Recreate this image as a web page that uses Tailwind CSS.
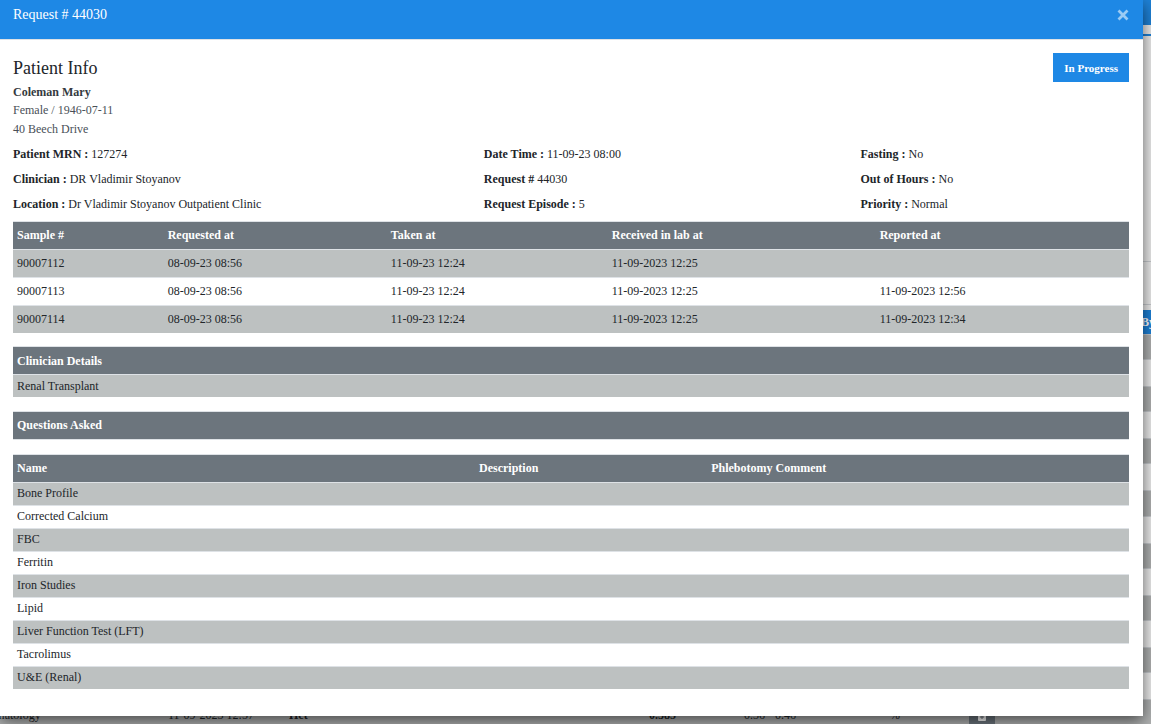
<!DOCTYPE html>
<html lang="en">
<head>
<meta charset="utf-8">
<title>Request # 44030</title>
<script src="https://cdn.jsdelivr.net/npm/@tailwindcss/browser@4"></script>
</head>
<body class="relative h-screen overflow-hidden bg-[#ededed] font-['Liberation_Serif',serif] text-xs text-[#212529]">

<!-- Results page under the dialog -->
<div class="absolute inset-0 flex flex-col overflow-hidden" inert>
  <div class="h-[25px] shrink-0 bg-[#1e82d8]"></div>
  <div class="h-[11px] shrink-0 border-b-2 border-[#1e82d8]"></div>
  <div class="h-[226px] shrink-0 border-b border-[#c8cbcf]"></div>
  <div class="h-[43px] shrink-0 border-b border-[#c8cbcf]"></div>
  <div class="mt-[5px] flex h-6 shrink-0 items-center justify-end bg-[#1e82d8] font-bold text-white"><span class="-mr-1">By</span></div>
  <div class="h-[26px] shrink-0 border-y border-[#c8cbcf] bg-[#b0b2b2]"></div>
  <div class="h-[26px] shrink-0"></div>
  <div class="h-[26px] shrink-0 border-y border-[#c8cbcf] bg-[#b0b2b2]"></div>
  <div class="h-[26px] shrink-0"></div>
  <div class="h-[26px] shrink-0 border-y border-[#c8cbcf] bg-[#b0b2b2]"></div>
  <div class="h-[26px] shrink-0"></div>
  <div class="h-[27px] shrink-0 border-y border-[#c8cbcf] bg-[#b0b2b2]"></div>
  <div class="h-[26px] shrink-0"></div>
  <div class="h-[26px] shrink-0 border-y border-[#c8cbcf] bg-[#b0b2b2]"></div>
  <div class="h-[26px] shrink-0"></div>
  <div class="h-[26px] shrink-0 border-y border-[#c8cbcf] bg-[#b0b2b2]"></div>
  <div class="h-[26px] shrink-0"></div>
  <div class="h-[26px] shrink-0 border-y border-[#c8cbcf] bg-[#b0b2b2]"></div>
  <div class="h-[26px] shrink-0"></div>
  <div class="flex h-[26px] shrink-0 items-center border-t border-[#c8cbcf] bg-[#b0b2b2] pt-1">
    <span class="-ml-6 w-48">Haematology</span>
    <span class="w-[121px]">11-09-2023 12:57</span>
    <span class="w-[360px] font-bold">Hct</span>
    <span class="w-[95px] font-bold">0.385</span>
    <span class="w-[146px]">0.36 - 0.46</span>
    <span class="w-[79px]">%</span>
    <button type="button" aria-label="Add comment" class="flex h-[22px] w-[26px] items-end justify-center self-start rounded-xs bg-[#6c757d] pb-1">
      <svg class="size-3" viewBox="0 0 12 12" fill="#ffffff"><path d="M2 1h8v9a1 1 0 0 1-1 1H3a1 1 0 0 1-1-1z"/><path d="M6 5v4M4 7h4" stroke="#6c757d"/></svg>
    </button>
  </div>
</div>

<!-- Request dialog -->
<section role="dialog" aria-labelledby="dialog-title" class="relative mr-2 bg-white pb-[27px] shadow-[0_5px_15px_rgba(0,0,0,0.6)]">
  <header class="flex h-10 items-start justify-between border-b border-[#dee2e6] bg-[#1e88e5] pt-[5px] pr-3 pl-[13px] text-white">
    <h1 id="dialog-title" class="text-sm leading-5">Request # 44030</h1>
    <button type="button" aria-label="Close" class="flex h-5 w-4 items-center justify-center text-[#9bcbf4]">
      <svg class="size-3" viewBox="0 0 12 12" fill="none" stroke="currentColor" stroke-width="2.800"><path d="M1.500 1.500l9 9M10.500 1.500l-9 9"/></svg>
    </button>
  </header>

  <div class="pt-[13px] pr-[14px] pl-[13px]">
    <div class="flex items-start justify-between">
      <div>
        <h2 class="text-lg leading-[30px]">Patient Info</h2>
        <p class="leading-[18px] font-bold text-[#343a40]">Coleman Mary</p>
        <p class="leading-[18px] text-[#495057]">Female / 1946-07-11</p>
        <p class="leading-5 text-[#495057]">40 Beech Drive</p>
      </div>
      <button type="button" class="h-[29px] bg-[#1e88e5] px-[11px] pt-px text-[11px] font-bold text-white">In Progress</button>
    </div>

    <div class="-mr-[14px] mt-[3px] mb-1 grid grid-cols-12 leading-[25px]">
      <p class="col-span-5"><b>Patient MRN :</b> 127274</p>
      <p class="col-span-4"><b>Date Time :</b> 11-09-23 08:00</p>
      <p class="col-span-3"><b>Fasting :</b> No</p>
      <p class="col-span-5"><b>Clinician :</b> DR Vladimir Stoyanov</p>
      <p class="col-span-4"><b>Request #</b> 44030</p>
      <p class="col-span-3"><b>Out of Hours :</b> No</p>
      <p class="col-span-5"><b>Location :</b> Dr Vladimir Stoyanov Outpatient Clinic</p>
      <p class="col-span-4"><b>Request Episode :</b> 5</p>
      <p class="col-span-3"><b>Priority :</b> Normal</p>
    </div>

    <table class="mb-[13px] w-full table-fixed border-separate border-spacing-0 text-left [&_td]:h-7 [&_td]:border-t [&_td]:border-[#dee2e6] [&_td]:px-1 [&_td]:pb-0.5 [&_th]:h-7 [&_th]:border-t [&_th]:border-[#dee2e6] [&_th]:px-1 [&_th]:pb-0.5">
      <thead class="bg-[#6c757d] text-white">
        <tr><th class="w-[13.5%]">Sample #</th><th class="w-[20%]">Requested at</th><th class="w-[19.8%]">Taken at</th><th class="w-[24%]">Received in lab at</th><th>Reported at</th></tr>
      </thead>
      <tbody>
        <tr class="bg-[#bdc1c1]"><td>90007112</td><td>08-09-23 08:56</td><td>11-09-23 12:24</td><td>11-09-2023 12:25</td><td></td></tr>
        <tr><td>90007113</td><td>08-09-23 08:56</td><td>11-09-23 12:24</td><td>11-09-2023 12:25</td><td>11-09-2023 12:56</td></tr>
        <tr class="bg-[#bdc1c1]"><td>90007114</td><td>08-09-23 08:56</td><td>11-09-23 12:24</td><td>11-09-2023 12:25</td><td>11-09-2023 12:34</td></tr>
      </tbody>
    </table>

    <table class="mb-[14px] w-full border-separate border-spacing-0 text-left [&_td]:h-[23px] [&_td]:border-t [&_td]:border-[#dee2e6] [&_td]:px-1 [&_th]:h-7 [&_th]:border-t [&_th]:border-[#dee2e6] [&_th]:px-1">
      <thead class="bg-[#6c757d] text-white"><tr><th>Clinician Details</th></tr></thead>
      <tbody><tr class="bg-[#bdc1c1]"><td>Renal Transplant</td></tr></tbody>
    </table>

    <table class="mb-[14px] w-full border-separate border-spacing-0 text-left">
      <thead class="bg-[#6c757d] text-white"><tr><th class="h-[29px] border-y border-[#dee2e6] px-1 pb-0.5">Questions Asked</th></tr></thead>
    </table>

    <table class="w-full table-fixed border-separate border-spacing-0 text-left [&_td]:h-[23px] [&_td]:border-t [&_td]:border-[#dee2e6] [&_td]:px-1 [&_td]:pb-0.5 [&_th]:h-7 [&_th]:border-t [&_th]:border-[#dee2e6] [&_th]:px-1 [&_th]:pb-0.5">
      <thead class="bg-[#6c757d] text-white">
        <tr><th class="w-[41.4%]">Name</th><th class="w-[20.8%]">Description</th><th>Phlebotomy Comment</th></tr>
      </thead>
      <tbody class="[&>tr:nth-child(odd)]:bg-[#bdc1c1]">
        <tr><td>Bone Profile</td><td></td><td></td></tr>
        <tr><td>Corrected Calcium</td><td></td><td></td></tr>
        <tr><td>FBC</td><td></td><td></td></tr>
        <tr><td>Ferritin</td><td></td><td></td></tr>
        <tr><td>Iron Studies</td><td></td><td></td></tr>
        <tr><td>Lipid</td><td></td><td></td></tr>
        <tr><td>Liver Function Test (LFT)</td><td></td><td></td></tr>
        <tr><td>Tacrolimus</td><td></td><td></td></tr>
        <tr><td>U&amp;E (Renal)</td><td></td><td></td></tr>
      </tbody>
    </table>
  </div>
</section>
</body>
</html>
